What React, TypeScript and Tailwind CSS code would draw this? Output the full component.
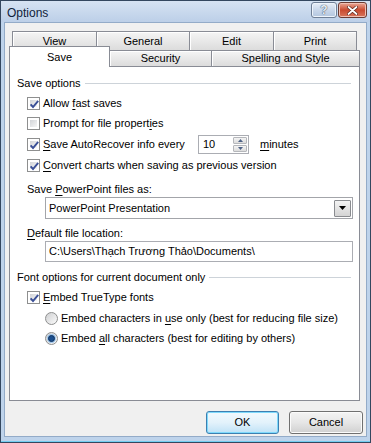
import React from "react";

const font = "font-['Liberation_Sans',Arial,sans-serif]";

const Acc: React.FC<{ children: React.ReactNode }> = ({ children }) => (
  <span className="underline underline-offset-[2px] decoration-[1px]">{children}</span>
);

const Check: React.FC<{ checked?: boolean }> = ({ checked }) => (
  <span className="w-[13px] h-[13px] shrink-0 border border-[#8e8f8f] bg-white p-[2px] flex">
    <span className="relative flex-1 bg-gradient-to-br from-[#d2d4d8] to-[#f6f6f6]">
      {checked && (
        <svg className="absolute -left-[1px] -top-[1px]" width="11" height="11" viewBox="0 0 11 11">
          <path d="M1.6 5.4 L4 8 L9.2 1.8" fill="none" stroke="#3a4f97" strokeWidth="1.9" />
        </svg>
      )}
    </span>
  </span>
);

const Radio: React.FC<{ checked?: boolean }> = ({ checked }) => (
  <span className="w-[13px] h-[13px] shrink-0 rounded-full border border-[#8e8f8f] bg-gradient-to-br from-[#cfd0d2] to-[#fbfbfb] flex items-center justify-center">
    {checked && (
      <span className="w-[7px] h-[7px] rounded-full bg-[#1c4f8e] border border-[#0f3160] shadow-[0_0_0_1px_#9fc6ea]" />
    )}
  </span>
);

const Tab: React.FC<{ label: string; className?: string }> = ({ label, className }) => (
  <div
    className={
      "flex items-center justify-center border-t border-r border-[#898c95] bg-gradient-to-b from-[#f5f5f5] to-[#dcdcdc] shadow-[inset_1px_1px_0_#ffffff] " +
      (className ?? "")
    }
  >
    {label}
  </div>
);

const CheckRow: React.FC<{ checked?: boolean; children: React.ReactNode }> = ({ checked, children }) => (
  <div className="flex items-center h-[20px] pl-[17px]">
    <Check checked={checked} />
    <span className="ml-[3px]">{children}</span>
  </div>
);

const RadioRow: React.FC<{ checked?: boolean; children: React.ReactNode }> = ({ checked, children }) => (
  <div className="flex items-center h-[20px] pl-[35px]">
    <Radio checked={checked} />
    <span className="ml-[3px]">{children}</span>
  </div>
);

const GroupHeader: React.FC<{ children: React.ReactNode; className?: string }> = ({ children, className }) => (
  <div className={"flex items-center h-[18px] pl-[7px] pr-[8px] " + (className ?? "")}>
    <span>{children}</span>
    <div className="flex-1 h-px bg-[#cdd3d9] ml-[4px]" />
  </div>
);

export default function App() {
  return (
    <div className={`${font} text-[11px] text-black leading-none w-[371px] h-[443px] border border-[#34475f] bg-[#bed3eb] px-[3px] pb-[5px] flex flex-col shadow-[inset_0_-1px_0_#74cdf0]`}>
      {/* Title bar */}
      <div className="-mx-[3px] h-[21px] flex items-start pl-[6px] pr-[3px] bg-gradient-to-b from-[#d6e3f2] to-[#bccfe8]">
        <span className="text-[12px] text-[#10223a] mt-[6px]">Options</span>
        <div className="ml-auto flex gap-[1px] mt-[1px]">
          <div className="w-[26px] h-[16px] rounded-[3px] border border-[#6f7f96] bg-gradient-to-b from-[#e8eff8] via-[#c9d7ea] to-[#b3c6df] flex items-center justify-center shadow-[inset_0_0_0_1px_#eef4fb]">
            <span className="text-[12px] font-bold text-[#e9eef5] [text-shadow:0_0_1px_#3c4b62,0_0_1px_#3c4b62]">?</span>
          </div>
          <div className="w-[29px] h-[16px] rounded-[3px] border border-[#6b3b33] bg-gradient-to-b from-[#e9a897] via-[#c9492f] to-[#d7755c] flex items-center justify-center shadow-[inset_0_0_0_1px_#f0bfb2]">
            <svg width="11" height="9" viewBox="0 0 11 9">
              <path d="M1.5 1 L9.5 8 M9.5 1 L1.5 8" stroke="#5a231a" strokeWidth="3.2" strokeLinecap="round" />
              <path d="M1.5 1 L9.5 8 M9.5 1 L1.5 8" stroke="#ffffff" strokeWidth="1.8" strokeLinecap="round" />
            </svg>
          </div>
        </div>
      </div>

      {/* Client area */}
      <div className="h-[415px] bg-[#f0f0f0] border border-[#93abc8] pt-[8px] flex flex-col">
        {/* Tabs */}
        <div className="ml-[4px] w-[351px]">
          <div className="flex h-[19px] ml-[3px]">
            <Tab label="View" className="w-[85px] border-l" />
            <Tab label="General" className="w-[93px]" />
            <Tab label="Edit" className="w-[84px]" />
            <Tab label="Print" className="w-[83px]" />
          </div>
          <div className="flex items-end h-[16px]">
            <div className="relative z-10 w-[101px] h-[21px] -mb-px border border-b-0 border-[#898c95] bg-white flex items-center justify-center">
              Save
            </div>
            <Tab label="Security" className="w-[102px] h-[16px]" />
            <Tab label="Spelling and Style" className="w-[148px] h-[16px]" />
          </div>
        </div>

        {/* Panel */}
        <div className="ml-[4px] w-[351px] h-[335px] border border-[#898c95] bg-white pt-[7px] flex flex-col">
          <GroupHeader>Save options</GroupHeader>
          <div className="mt-[1px]" />
          <CheckRow checked>
            Allow <Acc>f</Acc>ast saves
          </CheckRow>
          <CheckRow>
            Prompt for file propert<Acc>i</Acc>es
          </CheckRow>
          <div className="flex items-center h-[22px] pl-[17px]">
            <Check checked />
            <span className="ml-[3px] w-[155px]">
              <Acc>S</Acc>ave AutoRecover info every
            </span>
            <div className="w-[51px] h-[19px] border border-[#abadb3] bg-white flex items-stretch">
              <span className="flex-1 flex items-center pl-[4px]">10</span>
              <div className="w-[14px] my-px mr-px flex flex-col gap-px">
                <div className="flex-1 border border-[#b5b7bb] rounded-[1px] bg-gradient-to-b from-[#f4f4f4] to-[#dcdcdc] flex items-center justify-center">
                  <svg width="5" height="3" viewBox="0 0 5 3"><path d="M0 3 L2.5 0 L5 3Z" fill="#4d6185" /></svg>
                </div>
                <div className="flex-1 border border-[#b5b7bb] rounded-[1px] bg-gradient-to-b from-[#f4f4f4] to-[#dcdcdc] flex items-center justify-center">
                  <svg width="5" height="3" viewBox="0 0 5 3"><path d="M0 0 L2.5 3 L5 0Z" fill="#4d6185" /></svg>
                </div>
              </div>
            </div>
            <span className="ml-[11px]">
              <Acc>m</Acc>inutes
            </span>
          </div>
          <CheckRow checked>
            <Acc>C</Acc>onvert charts when saving as previous version
          </CheckRow>

          <div className="mt-[6px] h-[16px] flex items-center pl-[17px]">
            <span>
              Save <Acc>P</Acc>owerPoint files as:
            </span>
          </div>
          <div className="ml-[35px] w-[308px] h-[22px] border border-[#a3a5aa] bg-white flex items-center">
            <span className="flex-1 pl-[3px]">PowerPoint Presentation</span>
            <div className="w-[17px] h-[17px] mr-px border border-[#8a8c90] rounded-[1px] bg-gradient-to-b from-[#f3f3f3] to-[#d4d4d4] flex items-center justify-center">
              <svg width="7" height="4" viewBox="0 0 7 4"><path d="M0 0 L7 0 L3.5 4Z" fill="#000" /></svg>
            </div>
          </div>

          <div className="mt-[6px] h-[16px] flex items-center pl-[17px]">
            <span>
              <Acc>D</Acc>efault file location:
            </span>
          </div>
          <div className="ml-[35px] w-[308px] h-[21px] border border-[#abadb3] bg-white flex items-center pl-[3px]">
            C:\Users\Thạch Trương Thảo\Documents\
          </div>

          <GroupHeader className="mt-[6px]">Font options for current document only</GroupHeader>
          <div className="mt-[1px]" />
          <CheckRow checked>
            <Acc>E</Acc>mbed TrueType fonts
          </CheckRow>
          <div className="mt-[1px]" />
          <RadioRow>
            Embed characters in <Acc>u</Acc>se only (best for reducing file size)
          </RadioRow>
          <RadioRow checked>
            Embed <Acc>a</Acc>ll characters (best for editing by others)
          </RadioRow>
        </div>

        {/* Buttons */}
        <div className="mt-[10px] flex justify-end gap-[10px] pr-[3px] h-[23px]">
          <button className="w-[73px] h-[23px] rounded-[3px] border border-[#3c7fb1] bg-gradient-to-b from-[#f2f9fd] via-[#e3f2fb] to-[#bfe2f6] shadow-[inset_0_0_0_1px_#7fd9fb] flex items-center justify-center">
            OK
          </button>
          <button className="w-[74px] h-[23px] rounded-[3px] border border-[#707070] bg-gradient-to-b from-[#f4f4f4] via-[#e6e6e6] to-[#d0d0d0] shadow-[inset_0_0_0_1px_#fbfbfb] flex items-center justify-center">
            Cancel
          </button>
        </div>
      </div>
    </div>
  );
}
